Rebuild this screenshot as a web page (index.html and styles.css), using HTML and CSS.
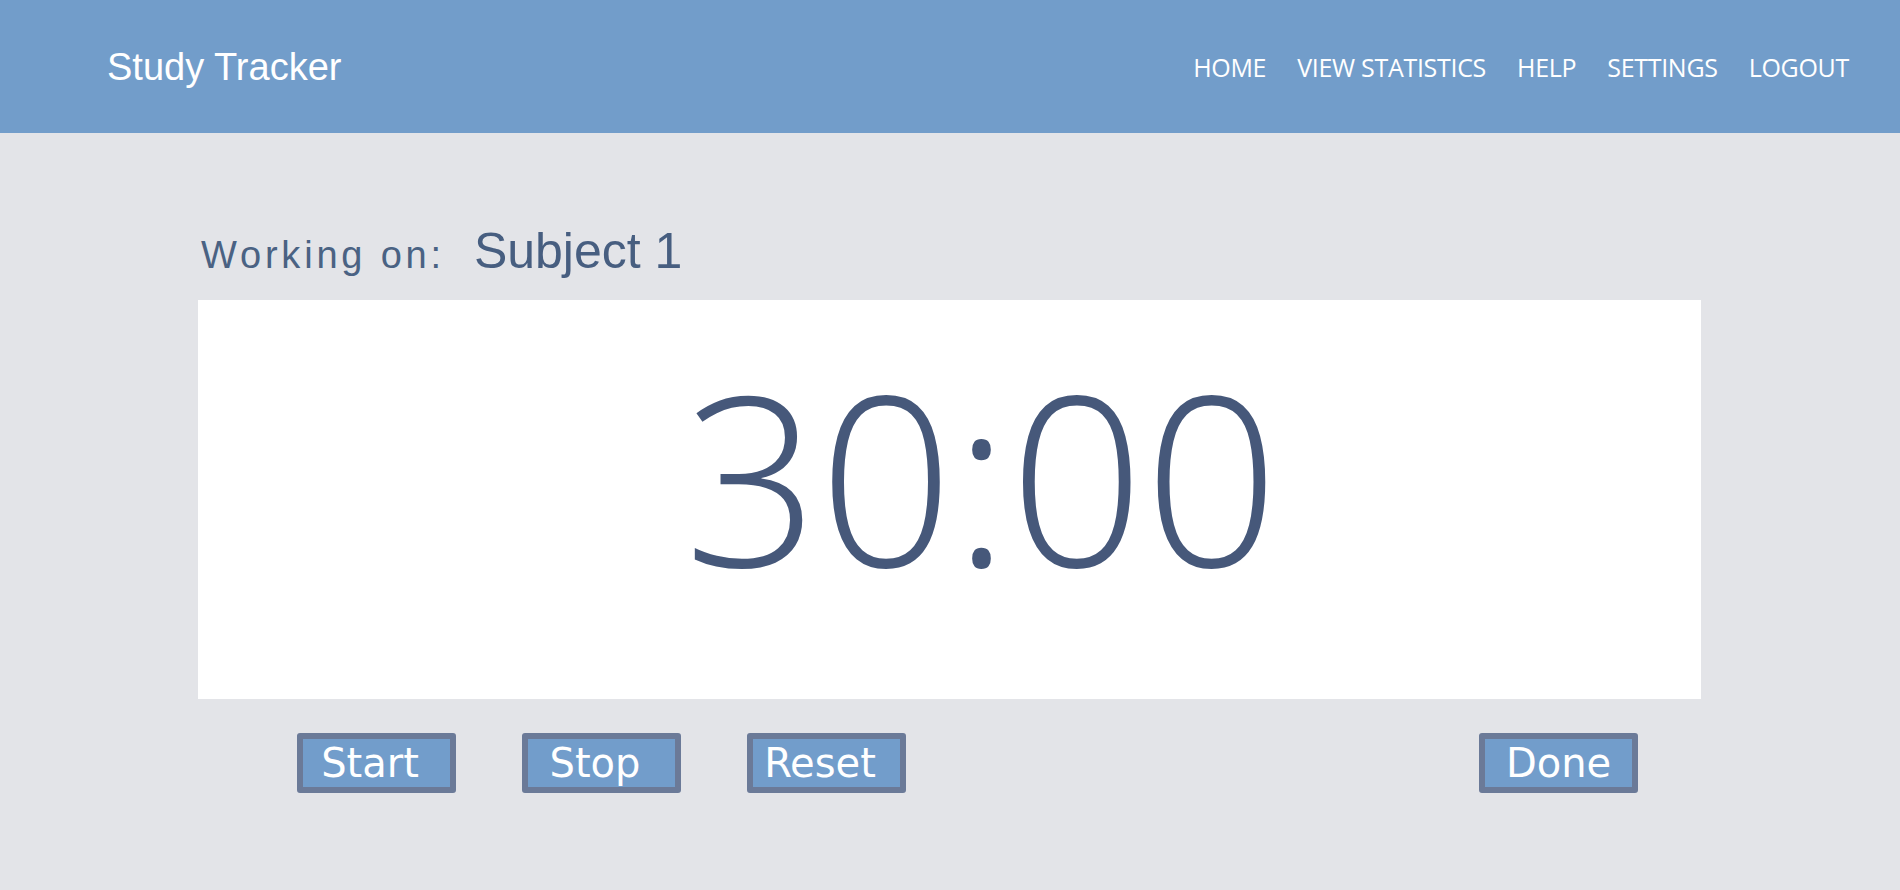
FILE: index.html
```html
<!DOCTYPE html>
<html lang="en">
<head>
<meta charset="utf-8">
<title>Study Tracker</title>
<link rel="stylesheet" href="styles.css">
</head>
<body>
<header class="topbar">
  <div class="brand">Study Tracker</div>
  <nav class="nav">
    <a href="#" class="nav-link">HOME</a>
    <a href="#" class="nav-link">VIEW STATISTICS</a>
    <a href="#" class="nav-link">HELP</a>
    <a href="#" class="nav-link">SETTINGS</a>
    <a href="#" class="nav-link">LOGOUT</a>
  </nav>
</header>
<main class="main">
  <div class="working">
    <span class="working-label">Working on:</span>
    <span class="working-subject">Subject 1</span>
  </div>
  <section class="timer-card">
    <div class="timer">30:00</div>
  </section>
  <div class="controls">
    <button class="btn">Start</button>
    <button class="btn">Stop</button>
    <button class="btn">Reset</button>
    <button class="btn btn-done">Done</button>
  </div>
</main>
</body>
</html>
```
FILE: styles.css
```css
html, body {
  margin: 0;
  padding: 0;
}
body {
  background: #e3e4e8;
  width: 1900px;
  height: 890px;
  overflow: hidden;
  font-family: "Liberation Sans", Arial, sans-serif;
}
.topbar {
  height: 133px;
  background: #729dca;
  display: flex;
  align-items: center;
  justify-content: space-between;
  padding: 0 51px 0 107px;
}
.brand {
  color: #ffffff;
  font-family: "Liberation Sans", Arial, sans-serif;
  font-size: 38px;
  padding-top: 2px;
}
.nav {
  display: flex;
  gap: 31px;
}
.nav-link {
  color: #ffffff;
  text-decoration: none;
  font-family: "Open Sans", sans-serif;
  font-size: 25px;
  letter-spacing: -0.3px;
}
.main {
  margin-left: 198px;
  width: 1503px;
  padding-top: 94px;
}
.working {
  height: 73px;
  display: flex;
  align-items: baseline;
  padding-left: 3px;
  color: #4a6283;
  line-height: 48px;
}
.working-label {
  font-size: 38px;
  letter-spacing: 3.8px;
}
.working-subject {
  font-size: 50px;
  margin-left: 29px;
  color: #475e80;
}
.timer-card {
  background: #ffffff;
  height: 399px;
  box-sizing: border-box;
  padding: 58px 0 0 64px;
  text-align: center;
}
.timer {
  font-family: "Open Sans", sans-serif;
  font-weight: 300;
  font-size: 236px;
  line-height: 1;
  color: #46587a;
}
.controls {
  display: flex;
  gap: 66px;
  padding: 0 63px 0 99px;
  margin-top: 34px;
}
.btn {
  width: 159px;
  height: 60px;
  box-sizing: border-box;
  background: #729dcb;
  border: 6px solid #6b7a98;
  border-radius: 3px;
  color: #ffffff;
  font-family: "DejaVu Sans", Verdana, sans-serif;
  font-size: 40px;
  line-height: 48px;
  padding: 0 13px 0 0;
  text-align: center;
}
.btn-done {
  margin-left: auto;
  padding: 0;
}
```
